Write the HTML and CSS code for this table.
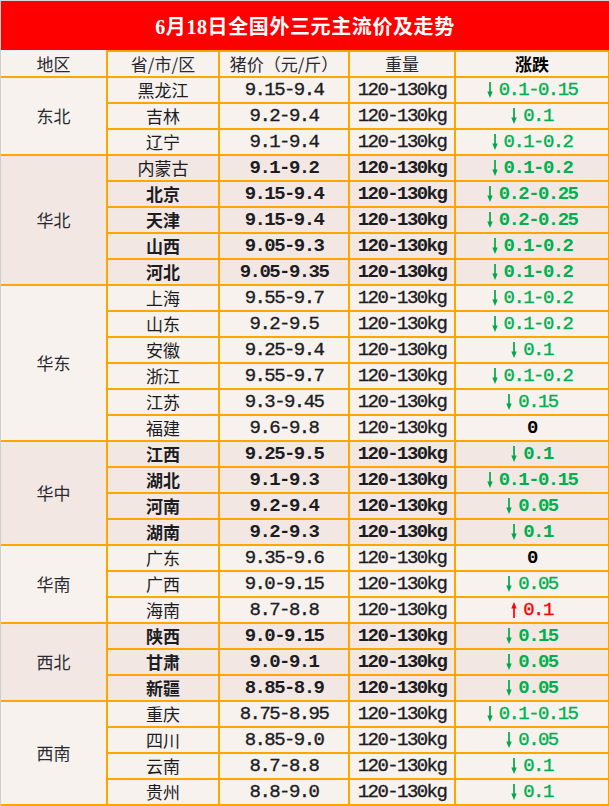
FILE: index.html
```html
<!DOCTYPE html>
<html lang="zh">
<head>
<meta charset="utf-8">
<title>6月18日全国外三元主流价及走势</title>
<link rel="stylesheet" href="styles.css">
</head>
<body>
<svg class="defs" width="0" height="0" aria-hidden="true">
  <symbol id="down" viewBox="0 0 6 16"><path d="M3 0V11" stroke="currentColor" stroke-width="1.7"/><path d="M0.3 9.5L3 16L5.7 9.5Z" fill="currentColor"/></symbol>
  <symbol id="up" viewBox="0 0 6 16"><path d="M3 5V16" stroke="currentColor" stroke-width="1.7"/><path d="M0.3 6.5L3 0L5.7 6.5Z" fill="currentColor"/></symbol>
</svg>
<div class="sheet">
  <div class="title">6月18日全国外三元主流价及走势</div>
  <table class="grid">
    <colgroup><col class="c1"><col class="c2"><col class="c3"><col class="c4"><col class="c5"></colgroup>
    <thead>
      <tr><th class="h-region">地区</th><th>省/市/区</th><th>猪价（元/斤）</th><th>重量</th><th class="h-chg">涨跌</th></tr>
    </thead>
    <tbody class="light">
      <tr><td class="region" rowspan="3">东北</td><td class="name">黑龙江</td><td class="num">9.15-9.4</td><td class="num">120-130kg</td><td class="num chg"><svg class="arr"><use href="#down"/></svg>0.1-0.15</td></tr>
      <tr><td class="name">吉林</td><td class="num">9.2-9.4</td><td class="num">120-130kg</td><td class="num chg"><svg class="arr"><use href="#down"/></svg>0.1</td></tr>
      <tr><td class="name">辽宁</td><td class="num">9.1-9.4</td><td class="num">120-130kg</td><td class="num chg"><svg class="arr"><use href="#down"/></svg>0.1-0.2</td></tr>
    </tbody>
    <tbody class="dark">
      <tr><td class="region" rowspan="5">华北</td><td class="name thin">内蒙古</td><td class="num">9.1-9.2</td><td class="num">120-130kg</td><td class="num chg"><svg class="arr"><use href="#down"/></svg>0.1-0.2</td></tr>
      <tr><td class="name">北京</td><td class="num">9.15-9.4</td><td class="num">120-130kg</td><td class="num chg"><svg class="arr"><use href="#down"/></svg>0.2-0.25</td></tr>
      <tr><td class="name">天津</td><td class="num">9.15-9.4</td><td class="num">120-130kg</td><td class="num chg"><svg class="arr"><use href="#down"/></svg>0.2-0.25</td></tr>
      <tr><td class="name">山西</td><td class="num">9.05-9.3</td><td class="num">120-130kg</td><td class="num chg"><svg class="arr"><use href="#down"/></svg>0.1-0.2</td></tr>
      <tr><td class="name">河北</td><td class="num">9.05-9.35</td><td class="num">120-130kg</td><td class="num chg"><svg class="arr"><use href="#down"/></svg>0.1-0.2</td></tr>
    </tbody>
    <tbody class="light">
      <tr><td class="region" rowspan="6">华东</td><td class="name">上海</td><td class="num">9.55-9.7</td><td class="num">120-130kg</td><td class="num chg"><svg class="arr"><use href="#down"/></svg>0.1-0.2</td></tr>
      <tr><td class="name">山东</td><td class="num">9.2-9.5</td><td class="num">120-130kg</td><td class="num chg"><svg class="arr"><use href="#down"/></svg>0.1-0.2</td></tr>
      <tr><td class="name">安徽</td><td class="num">9.25-9.4</td><td class="num">120-130kg</td><td class="num chg"><svg class="arr"><use href="#down"/></svg>0.1</td></tr>
      <tr><td class="name">浙江</td><td class="num">9.55-9.7</td><td class="num">120-130kg</td><td class="num chg"><svg class="arr"><use href="#down"/></svg>0.1-0.2</td></tr>
      <tr><td class="name">江苏</td><td class="num">9.3-9.45</td><td class="num">120-130kg</td><td class="num chg"><svg class="arr"><use href="#down"/></svg>0.15</td></tr>
      <tr><td class="name">福建</td><td class="num">9.6-9.8</td><td class="num">120-130kg</td><td class="num chg zero">0</td></tr>
    </tbody>
    <tbody class="dark">
      <tr><td class="region" rowspan="4">华中</td><td class="name">江西</td><td class="num">9.25-9.5</td><td class="num">120-130kg</td><td class="num chg"><svg class="arr"><use href="#down"/></svg>0.1</td></tr>
      <tr><td class="name">湖北</td><td class="num">9.1-9.3</td><td class="num">120-130kg</td><td class="num chg"><svg class="arr"><use href="#down"/></svg>0.1-0.15</td></tr>
      <tr><td class="name">河南</td><td class="num">9.2-9.4</td><td class="num">120-130kg</td><td class="num chg"><svg class="arr"><use href="#down"/></svg>0.05</td></tr>
      <tr><td class="name">湖南</td><td class="num">9.2-9.3</td><td class="num">120-130kg</td><td class="num chg"><svg class="arr"><use href="#down"/></svg>0.1</td></tr>
    </tbody>
    <tbody class="light">
      <tr><td class="region" rowspan="3">华南</td><td class="name">广东</td><td class="num">9.35-9.6</td><td class="num">120-130kg</td><td class="num chg zero">0</td></tr>
      <tr><td class="name">广西</td><td class="num">9.0-9.15</td><td class="num">120-130kg</td><td class="num chg"><svg class="arr"><use href="#down"/></svg>0.05</td></tr>
      <tr><td class="name">海南</td><td class="num">8.7-8.8</td><td class="num">120-130kg</td><td class="num chg rise"><svg class="arr"><use href="#up"/></svg>0.1</td></tr>
    </tbody>
    <tbody class="dark">
      <tr><td class="region" rowspan="3">西北</td><td class="name">陕西</td><td class="num">9.0-9.15</td><td class="num">120-130kg</td><td class="num chg"><svg class="arr"><use href="#down"/></svg>0.15</td></tr>
      <tr><td class="name">甘肃</td><td class="num">9.0-9.1</td><td class="num">120-130kg</td><td class="num chg"><svg class="arr"><use href="#down"/></svg>0.05</td></tr>
      <tr><td class="name">新疆</td><td class="num">8.85-8.9</td><td class="num">120-130kg</td><td class="num chg"><svg class="arr"><use href="#down"/></svg>0.05</td></tr>
    </tbody>
    <tbody class="light">
      <tr><td class="region" rowspan="4">西南</td><td class="name">重庆</td><td class="num">8.75-8.95</td><td class="num">120-130kg</td><td class="num chg"><svg class="arr"><use href="#down"/></svg>0.1-0.15</td></tr>
      <tr><td class="name">四川</td><td class="num">8.85-9.0</td><td class="num">120-130kg</td><td class="num chg"><svg class="arr"><use href="#down"/></svg>0.05</td></tr>
      <tr><td class="name">云南</td><td class="num">8.7-8.8</td><td class="num">120-130kg</td><td class="num chg"><svg class="arr"><use href="#down"/></svg>0.1</td></tr>
      <tr><td class="name">贵州</td><td class="num">8.8-9.0</td><td class="num">120-130kg</td><td class="num chg"><svg class="arr"><use href="#down"/></svg>0.1</td></tr>
    </tbody>
  </table>
</div>
</body>
</html>
```

FILE: styles.css
```css
html, body {
  margin: 0;
  padding: 0;
  background: #ffffff;
}

.defs {
  position: absolute;
  width: 0;
  height: 0;
  overflow: hidden;
}

.sheet {
  width: 609px;
  height: 806px;
  box-sizing: border-box;
  border-top: 1px solid #d9d9d9;
  border-left: 1px solid #cfcfcf;
  overflow: hidden;
  background: #f7f2ee;
}

.title {
  height: 49px;
  background: #ff0000;
  color: #ffffff;
  display: flex;
  align-items: center;
  justify-content: center;
  font-family: "Liberation Serif", "Noto Sans CJK SC", serif;
  font-size: 20px;
  font-weight: 700;
  letter-spacing: 0.6px;
}

.grid {
  width: 608px;
  border-collapse: collapse;
  table-layout: fixed;
  color: #1c1c24;
}

.c1 { width: 106px; }
.c2 { width: 112px; }
.c3 { width: 130px; }
.c4 { width: 106px; }
.c5 { width: 154px; }

.grid th,
.grid td {
  border: 2px solid #ffa500;
  padding: 0;
  height: 24px;
  line-height: 24px;
  text-align: center;
  white-space: nowrap;
  overflow: hidden;
}

.grid th {
  font-family: "Noto Sans CJK SC", sans-serif;
  font-size: 17px;
  font-weight: 400;
  color: #2a2a33;
  background: #f7f2ee;
}

.grid th.h-region {
  border-top: none;
  border-left: none;
}

.grid th.h-chg {
  font-weight: 700;
  color: #000000;
}

.grid td.region {
  border-left: none;
  font-family: "Noto Sans CJK SC", sans-serif;
  font-size: 17px;
  font-weight: 400;
  color: #2a2a33;
}

.light td { background: #f7f2ee; }
.dark td { background: #f2e7e2; }

.name {
  font-family: "Noto Sans CJK SC", sans-serif;
  font-size: 17px;
  font-weight: 400;
}

.num {
  font-family: "Liberation Mono", "Noto Sans CJK SC", monospace;
  font-size: 19px;
  letter-spacing: -1.56px;
  font-weight: 400;
  -webkit-text-stroke: 0.35px currentColor;
}

.dark .name,
.dark .num {
  font-weight: 700;
  -webkit-text-stroke: 0;
}

.dark .name.thin {
  font-weight: 400;
}

.chg {
  color: #00b050;
}

.chg.zero {
  color: #000000;
  font-weight: 700;
  -webkit-text-stroke: 0;
}

.chg.rise {
  color: #ff0000;
}

.arr {
  width: 6px;
  height: 16px;
  margin-right: 6px;
  vertical-align: -3px;
  color: #00a84a;
}

.rise .arr {
  color: #ff0000;
}
```
